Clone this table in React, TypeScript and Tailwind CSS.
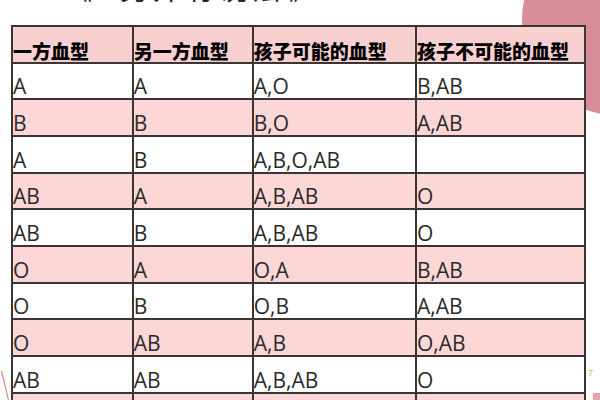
import React from "react";

const rows: [string, string, string, string][] = [
  ["A", "A", "A,O", "B,AB"],
  ["B", "B", "B,O", "A,AB"],
  ["A", "B", "A,B,O,AB", ""],
  ["AB", "A", "A,B,AB", "O"],
  ["AB", "B", "A,B,AB", "O"],
  ["O", "A", "O,A", "B,AB"],
  ["O", "B", "O,B", "A,AB"],
  ["O", "AB", "A,B", "O,AB"],
  ["AB", "AB", "A,B,AB", "O"],
  ["", "", "", ""],
];

const headers = ["一方血型", "另一方血型", "孩子可能的血型", "孩子不可能的血型"];

export default function App() {
  return (
    <div className="relative w-[600px] h-[400px] overflow-hidden bg-white">
      {/* decorative circle */}
      <div className="absolute left-[522px] top-[-75px] w-[190px] h-[190px] rounded-full bg-[#d88b99]" />
      {/* decorative line bottom-left */}
      <svg className="absolute left-0 top-[368px]" width="14" height="32" viewBox="0 0 14 32">
        <line x1="1.5" y1="3" x2="8.5" y2="32" stroke="#d88b99" strokeWidth="1.2" />
      </svg>
      {/* small marks bottom-right */}
      <div className="absolute left-[588px] top-[369px] text-[9px] leading-none text-[#b9c25a] font-['Liberation_Sans',sans-serif]">
        7
      </div>
      <div className="absolute left-[593px] top-[393px] w-[7px] h-[7px] bg-[#e3a3b0]" />

      <div className="relative flex flex-col">
        {/* title (cut off at top) */}
        <div className="h-[25px] overflow-hidden flex items-end">
          <div className="mb-[23px] ml-[64px] flex items-end text-[28px] leading-none text-[#222] font-['Noto_Sans_CJK_SC',sans-serif]">
            <span>《</span>
            <span className="ml-[28px] tracking-[5px]">另外有说法</span>
            <span className="ml-[4px]">》</span>
          </div>
        </div>

        {/* table */}
        <div className="ml-[11px] w-[575px] border-x-2 border-t-2 border-[#3a3434] flex flex-col">
          <div className="grid grid-cols-[120.7px_120px_163.3px_169px] h-[36.7px] bg-[#f9d0d0] border-b-2 border-[#3a3434]">
            {headers.map((h, i) => (
              <div
                key={i}
                className={`flex items-end pb-[2px] ${i < 3 ? "border-r-2 border-[#3a3434]" : ""} text-[19px] leading-none font-black text-black font-['Noto_Sans_CJK_SC',sans-serif]`}
              >
                {h}
              </div>
            ))}
          </div>
          {rows.map((r, ri) => (
            <div
              key={ri}
              className={`grid grid-cols-[120.7px_120px_163.3px_169px] h-[36.67px] border-b-2 border-[#3a3434] ${
                ri % 2 === 1 ? "bg-[#fdd6d6]" : "bg-white"
              }`}
            >
              {r.map((c, ci) => (
                <div
                  key={ci}
                  className={`flex items-end pb-[1px] ${ci < 3 ? "border-r-2 border-[#3a3434]" : ""} text-[21px] leading-none text-[#2a2a2a] font-['Open_Sans',sans-serif]`}
                >
                  {c}
                </div>
              ))}
            </div>
          ))}
        </div>
      </div>
    </div>
  );
}
